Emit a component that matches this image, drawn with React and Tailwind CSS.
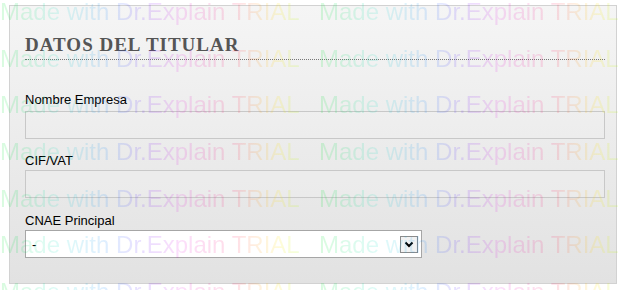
import React from "react"

const rows = [0, 1, 2, 3, 4, 5, 6]

function Watermark() {
    return (
        <div className="pointer-events-none absolute inset-0 overflow-hidden">
            <div className="-mt-[11px] flex flex-col">
                {rows.map((r) => (
                    <div key={r} className="flex whitespace-nowrap text-[24px] leading-[46.67px]">
                        <span className="w-[319px] shrink-0">
                            <span className="bg-[linear-gradient(90deg,rgba(0,230,40,0.15)_0%,rgba(0,220,200,0.13)_20%,rgba(0,120,255,0.13)_36%,rgba(90,0,255,0.13)_48%,rgba(230,0,220,0.13)_60%,rgba(255,0,80,0.13)_78%,rgba(255,140,0,0.13)_86%,rgba(255,230,0,0.15)_93%,rgba(170,255,0,0.15)_100%)] bg-clip-text text-transparent">
                                Made with Dr.Explain TRIAL
                            </span>
                        </span>
                        <span className="shrink-0">
                            <span className="bg-[linear-gradient(90deg,rgba(0,230,40,0.15)_0%,rgba(0,220,200,0.13)_20%,rgba(0,120,255,0.13)_36%,rgba(90,0,255,0.13)_48%,rgba(230,0,220,0.13)_60%,rgba(255,0,80,0.13)_78%,rgba(255,140,0,0.13)_86%,rgba(255,230,0,0.15)_93%,rgba(170,255,0,0.15)_100%)] bg-clip-text text-transparent">
                                Made with Dr.Explain TRIAL
                            </span>
                        </span>
                    </div>
                ))}
            </div>
        </div>
    )
}

export default function App() {
    return (
        <div className="relative w-[625px] h-[290px] overflow-hidden bg-white font-['Liberation_Sans',Arial,sans-serif] text-black">
            <div className="ml-[9px] mt-[5px] w-[608px] h-[279px] border border-[#d2d2d2] bg-linear-to-b from-[#f5f5f5] to-[#e2e2e2] pl-[15px] pr-[11px] pt-[28px]">
                <h2 className="border-b border-dotted border-[#777] pb-[3px] font-['Liberation_Serif','Times_New_Roman',serif] text-[19px] font-bold leading-[22px] tracking-[1px] text-[#555]">
                    DATOS DEL TITULAR
                </h2>

                <div className="mt-[32px] text-[13px] leading-[15px]">Nombre Empresa</div>
                <div className="mt-[4px] h-[28px] border border-[#c8c8c8] bg-[#efefef]/40"></div>

                <div className="mt-[14px] text-[13px] leading-[15px]">CIF/VAT</div>
                <div className="mt-[2px] h-[28px] border border-[#c8c8c8] bg-[#efefef]/40"></div>

                <div className="mt-[15px] text-[13px] leading-[15px]">CNAE Principal</div>
                <div className="mt-[2px] flex h-[28px] w-[397px] items-center justify-between border border-[#a6a6a6] bg-white pl-[6px] pr-[3px]">
                    <span className="text-[13px] leading-[15px]">-</span>
                    <span className="flex h-[17px] w-[18px] items-center justify-center border border-[#8c8c8c] bg-[#f2f2f2]">
                        <svg width="10" height="7" viewBox="0 0 10 7">
                            <path d="M1.5 1.5 L5 5 L8.5 1.5" fill="none" stroke="#000" strokeWidth="2" />
                        </svg>
                    </span>
                </div>
            </div>
            <Watermark />
        </div>
    )
}
